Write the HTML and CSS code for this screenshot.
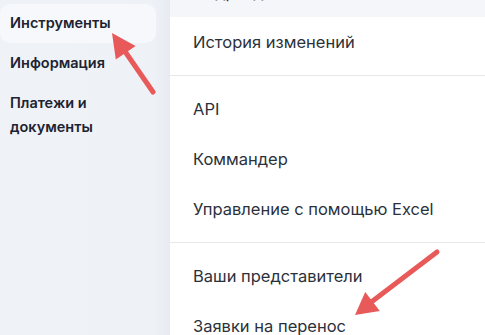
FILE: index.html
```html
<!DOCTYPE html>
<html lang="ru">
<head>
    <meta charset="UTF-8">
    <meta name="viewport" content="width=device-width, initial-scale=1.0">
    <title>Инструменты</title>
    <link rel="stylesheet" href="styles.css">
</head>
<body>

    <div class="layout">
        <!-- Left navigation -->
        <nav class="sidebar">
            <a class="side-item active">Инструменты</a>
            <a class="side-item">Информация</a>
            <a class="side-item">Платежи и<br>документы</a>
        </nav>

        <!-- Tools menu -->
        <div class="menu">
            <div class="group">
                <a class="menu-item hovered">Подразделения</a>
                <a class="menu-item">История изменений</a>
            </div>
            <div class="group">
                <a class="menu-item">API</a>
                <a class="menu-item">Коммандер</a>
                <a class="menu-item">Управление с помощью Excel</a>
            </div>
            <div class="group">
                <a class="menu-item">Ваши представители</a>
                <a class="menu-item">Заявки на перенос</a>
            </div>
        </div>
    </div>

    <!-- Annotation arrows -->
    <svg class="arrows" width="485" height="335" viewBox="0 0 485 335">
        <line x1="153" y1="92" x2="124" y2="50" stroke="#e85a5a" stroke-width="5" stroke-linecap="round"/>
        <polygon points="112,33 135.6,45.9 115.8,59.5" fill="#e85a5a"/>
        <line x1="437" y1="252" x2="370" y2="303" stroke="#e85a5a" stroke-width="5" stroke-linecap="round"/>
        <polygon points="355,315 365.2,292 379.8,311" fill="#e85a5a"/>
    </svg>

</body>
</html>
```

FILE: styles.css
```css
body {
    margin: 0;
    font-family: Inter, "Noto Sans", sans-serif;
    background: white;
    overflow: hidden;
}

.layout {
    display: flex;
    height: 335px;
}

.sidebar {
    width: 170px;
    flex-shrink: 0;
    padding-top: 4px;
    box-sizing: border-box;
    background: linear-gradient(to right, #eff2f7, #eef1f6 90%, #e7eaf1);
    display: flex;
    flex-direction: column;
}

.side-item {
    display: block;
    margin-right: 14px;
    padding: 8px 10px;
    font-size: 14.5px;
    line-height: 24px;
    font-weight: 600;
    color: #1d2431;
    border-radius: 10px;
}

.side-item.active {
    background: #f7f8fb;
    padding-top: 7px;
    padding-bottom: 8px;
}

.menu {
    flex: 1;
    background: white;
}

.group {
    padding: 8px 0;
    border-bottom: 1px solid #e6e8ec;
}

.group:first-child {
    padding-top: 0;
}

.menu-item {
    display: block;
    height: 50px;
    line-height: 50px;
    padding-left: 23px;
    font-size: 16.5px;
    color: #2b313b;
}

.menu-item.hovered {
    background: #f5f6fa;
    margin-top: -33px;
}

.arrows {
    position: absolute;
    left: 0;
    top: 0;
    pointer-events: none;
}
```
